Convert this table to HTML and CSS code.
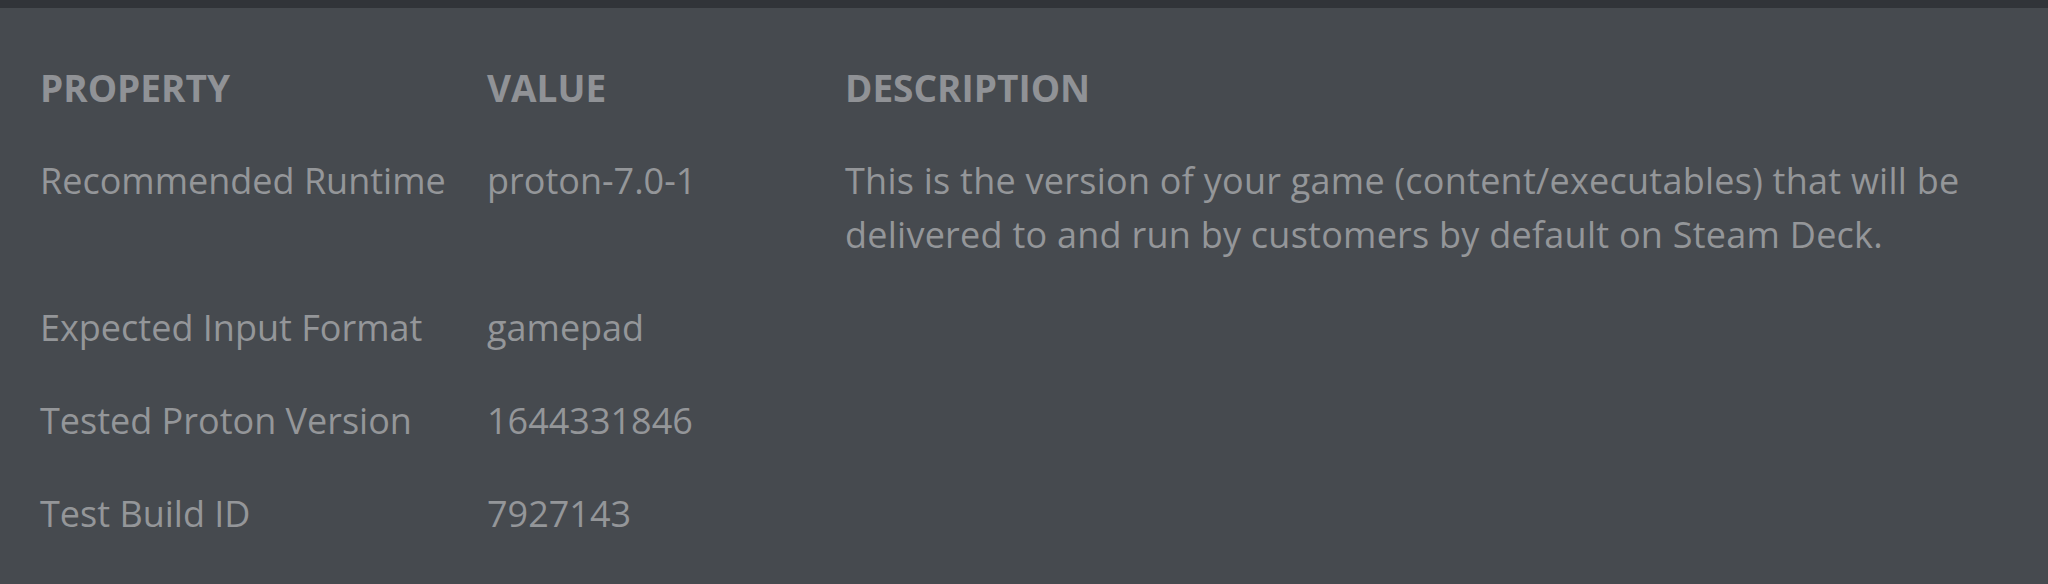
FILE: index.html
```html
<!DOCTYPE html>
<html>
<head>
<meta charset="utf-8">
<link rel="stylesheet" href="styles.css">
</head>
<body>
<div class="topbar"></div>
<div class="panel">
  <div class="grid">
    <div class="cell head">PROPERTY</div>
    <div class="cell head">VALUE</div>
    <div class="cell head">DESCRIPTION</div>

    <div class="cell">Recommended Runtime</div>
    <div class="cell">proton-7.0-1</div>
    <div class="cell desc">This is the version of your game (content/executables) that will be delivered to and run by customers by default on Steam Deck.</div>

    <div class="cell">Expected Input Format</div>
    <div class="cell">gamepad</div>
    <div class="cell desc"></div>

    <div class="cell">Tested Proton Version</div>
    <div class="cell">1644331846</div>
    <div class="cell desc"></div>

    <div class="cell">Test Build ID</div>
    <div class="cell">7927143</div>
    <div class="cell desc"></div>
  </div>
</div>
</body>
</html>
```
FILE: styles.css
```css
html, body {
  margin: 0;
  padding: 0;
  background: #464a4f;
  width: 2048px;
  height: 584px;
  overflow: hidden;
}
.topbar {
  height: 8px;
  background: #313439;
}
.panel {
  padding: 33px 40px 0 40px;
  font-family: "Open Sans", "Noto Sans", sans-serif;
  color: #949699;
}
.grid {
  display: grid;
  grid-template-columns: 447px 358px 1160px;
}
.cell {
  font-size: 36px;
  line-height: 54px;
  padding: 20px 0 19px 0;
}
.head {
  font-weight: 700;
  font-size: 37px;
  color: #909296;
}
.desc {
  letter-spacing: 0.25px;
}
```
